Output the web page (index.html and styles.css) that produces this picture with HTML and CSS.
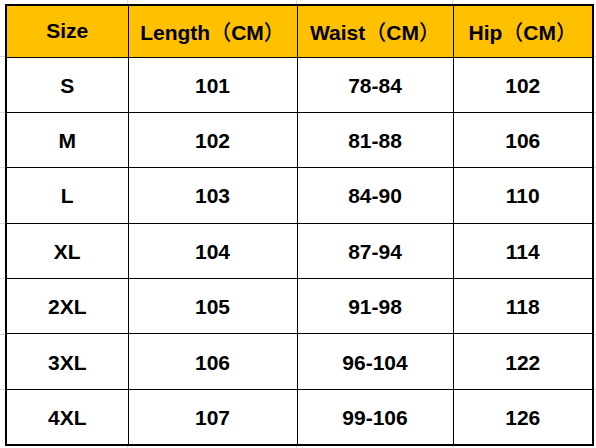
FILE: index.html
```html
<!DOCTYPE html>
<html>
<head>
<meta charset="utf-8">
<link rel="stylesheet" href="styles.css">
</head>
<body>
<div class="sheet">
<table class="size-table">
  <colgroup>
    <col class="c1"><col class="c2"><col class="c3"><col class="c4">
  </colgroup>
  <thead>
    <tr class="head">
      <th>Size</th><th>Length<span class="par">（</span>CM<span class="par">）</span></th><th>Waist<span class="par">（</span>CM<span class="par">）</span></th><th>Hip<span class="par">（</span>CM<span class="par">）</span></th>
    </tr>
  </thead>
  <tbody>
    <tr><td>S</td><td>101</td><td>78-84</td><td>102</td></tr>
    <tr><td>M</td><td>102</td><td>81-88</td><td>106</td></tr>
    <tr><td>L</td><td>103</td><td>84-90</td><td>110</td></tr>
    <tr><td>XL</td><td>104</td><td>87-94</td><td>114</td></tr>
    <tr><td>2XL</td><td>105</td><td>91-98</td><td>118</td></tr>
    <tr><td>3XL</td><td>106</td><td>96-104</td><td>122</td></tr>
    <tr><td>4XL</td><td>107</td><td>99-106</td><td>126</td></tr>
  </tbody>
</table>
</div>
</body>
</html>
```
FILE: styles.css
```css
html, body {
  margin: 0;
  padding: 0;
  background: #ffffff;
}
.sheet {
  padding: 4px 0 0 5px;
  height: 444px;
  background:
    linear-gradient(#dadada, #dadada) 127px 0 / 1px 448px no-repeat,
    linear-gradient(#dadada, #dadada) 296px 0 / 1px 448px no-repeat,
    linear-gradient(#dadada, #dadada) 452px 0 / 1px 448px no-repeat,
    linear-gradient(#dadada, #dadada) 0 56px / 596px 1px no-repeat,
    linear-gradient(#dadada, #dadada) 0 112px / 596px 1px no-repeat,
    linear-gradient(#dadada, #dadada) 0 167px / 596px 1px no-repeat,
    linear-gradient(#dadada, #dadada) 0 223px / 596px 1px no-repeat,
    linear-gradient(#dadada, #dadada) 0 278px / 596px 1px no-repeat,
    linear-gradient(#dadada, #dadada) 0 334px / 596px 1px no-repeat,
    linear-gradient(#dadada, #dadada) 0 389px / 596px 1px no-repeat,
    #ffffff;
}
.size-table {
  border-collapse: collapse;
  table-layout: fixed;
  width: 587px;
  border: 2px solid #000;
  background: #fff;
  font-family: "Liberation Sans", "Noto Sans CJK SC", Arial, sans-serif;
  font-weight: bold;
  font-size: 21px;
  color: #000;
}
.c1 { width: 122px; }
.c2 { width: 169px; }
.c3 { width: 156px; }
.c4 { width: 140px; }
.size-table th,
.size-table td {
  border: 1px solid #000;
  text-align: center;
  vertical-align: middle;
  padding: 0;
  font-weight: bold;
}
.par {
  font-family: "Noto Sans CJK SC", sans-serif;
  font-weight: 500;
  font-size: 21px;
}
.head {
  height: 52px;
  background: #ffc000;
}
.head th {
  padding-top: 0;
}
.size-table tbody tr {
  height: 55.4px;
}
.size-table td {
  padding-top: 2px;
}
```
